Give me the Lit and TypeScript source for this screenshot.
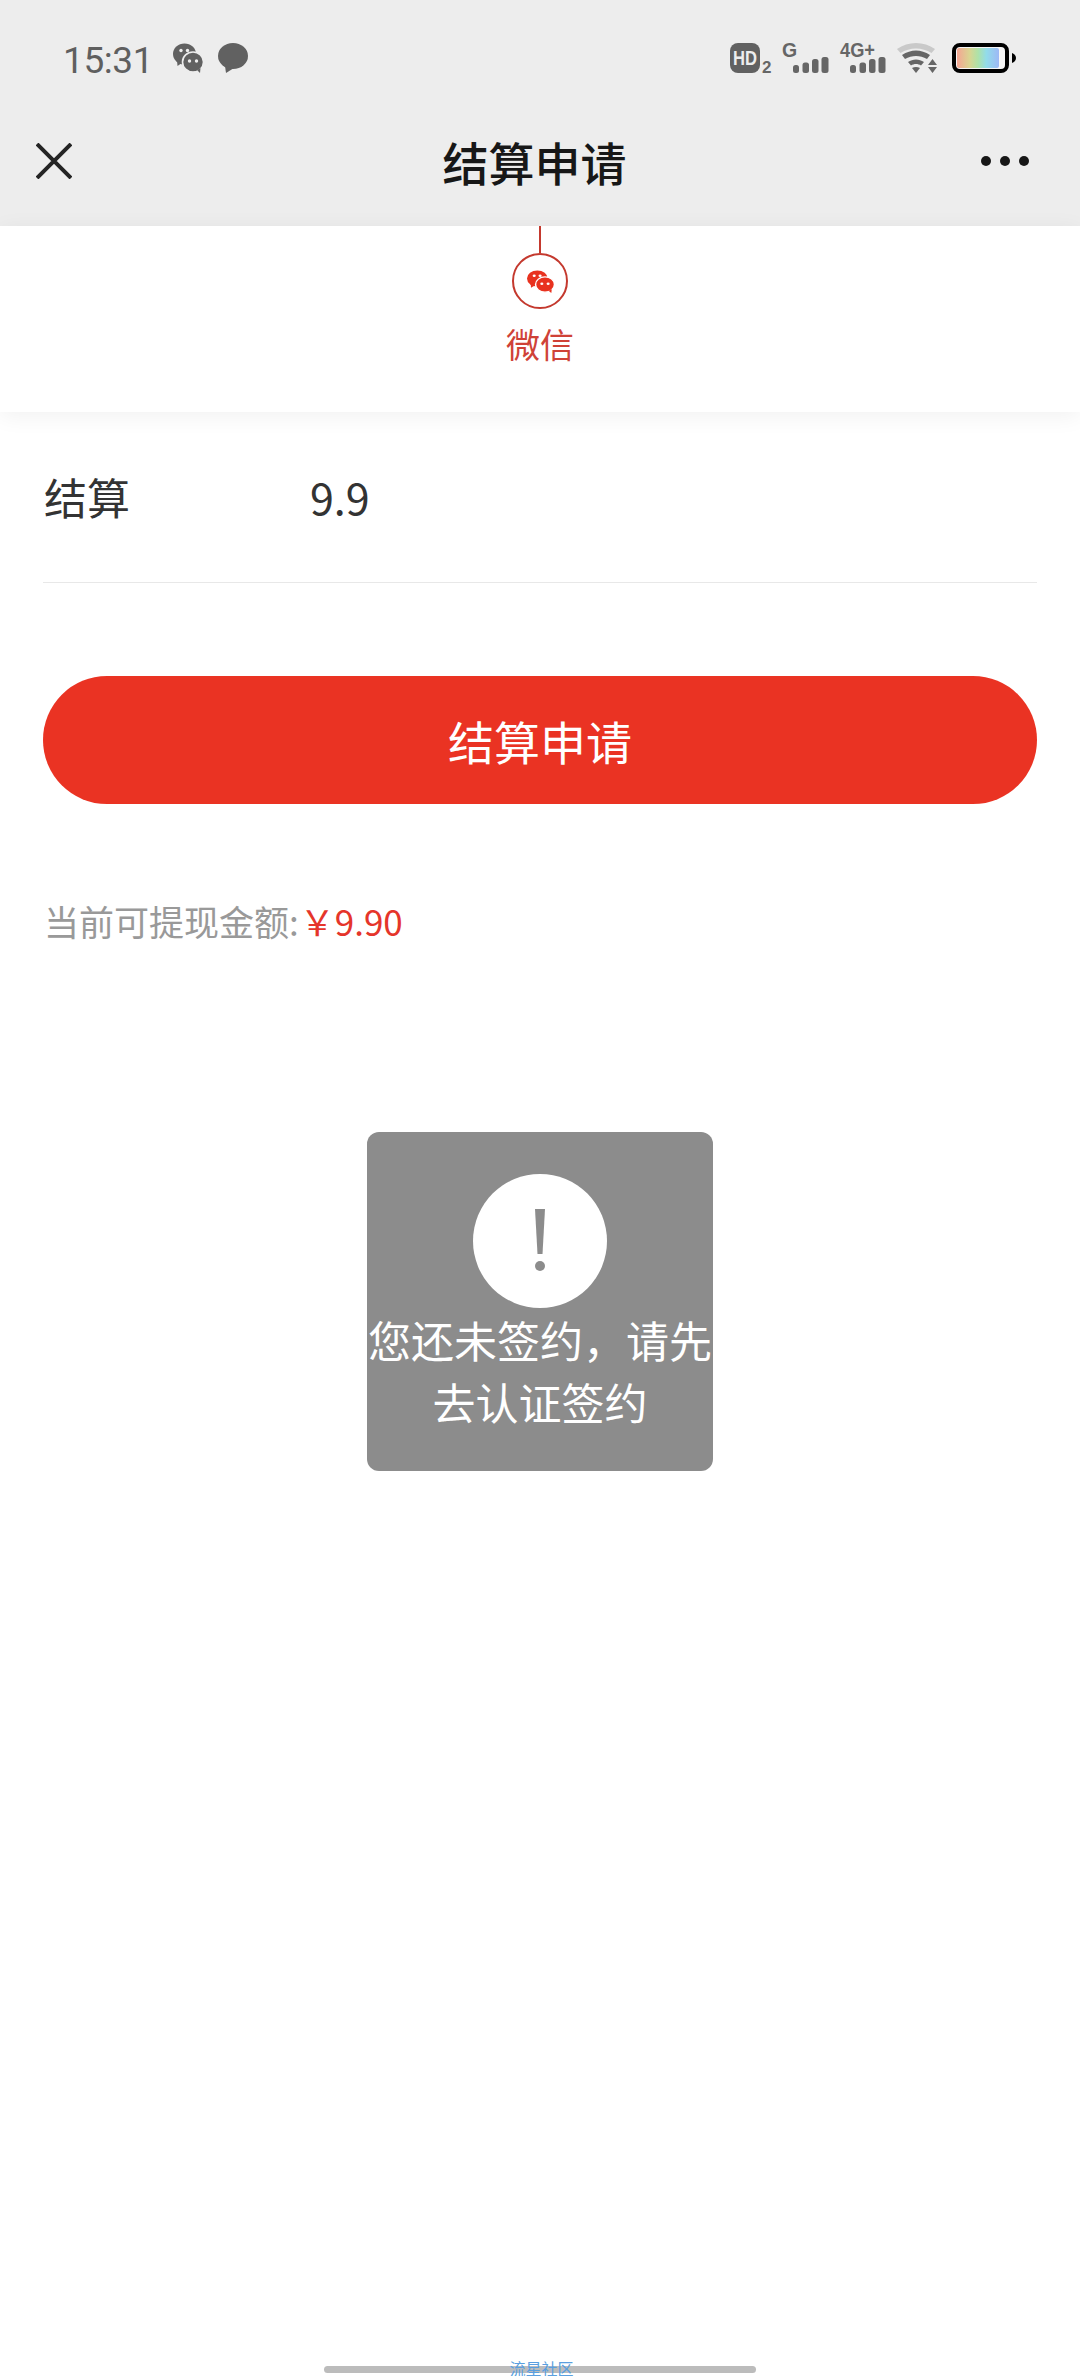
import { LitElement, html, css, svg } from "lit";
import { customElement } from "lit/decorators.js";

// two overlapping chat bubbles, drawn in a 30x30 box
const wechat = (fg: string, bg: string) => svg`
  <ellipse cx="11.5" cy="11" rx="11.5" ry="10.5" fill="${fg}" />
  <path d="M4 17l.5 6 5-3.5z" fill="${fg}" />
  <ellipse cx="20" cy="19" rx="10.5" ry="10" fill="${fg}" stroke="${bg}" stroke-width="1.6" />
  <path d="M24 27l3 3 .5-5z" fill="${fg}" />
  <circle cx="8" cy="7.5" r="1.7" fill="${bg}" />
  <circle cx="14.5" cy="7.5" r="1.7" fill="${bg}" />
  <circle cx="16.5" cy="18" r="1.7" fill="${bg}" />
  <circle cx="23.5" cy="18" r="1.7" fill="${bg}" />
`;

const signal = (x: number) => svg`
  <rect x="${x}" y="22" width="6" height="8" rx="2.5" fill="#666" />
  <rect x="${x + 9.5}" y="19.500" width="6.500" height="10.500" rx="2.5" fill="#666" />
  <rect x="${x + 19}" y="16" width="6.500" height="14" rx="2.5" fill="#666" />
  <rect x="${x + 28.5}" y="14" width="7" height="16" rx="2.5" fill="#666" />
`;

@customElement("app-root")
export class AppRoot extends LitElement {
  static styles = css`
    :host {
      display: block;
      font-family: "Noto Sans CJK SC", "Noto Sans", sans-serif;
    }
    .page {
      position: relative;
      display: flex;
      flex-direction: column;
      height: 2376px;
      overflow: hidden;
      background: #fff;
      color: #333;
    }
    .top {
      background: #ededed;
      height: 226px;
      flex: none;
    }
    .status {
      height: 116px;
      box-sizing: border-box;
      padding: 43px 64px 0 63px;
      display: flex;
      align-items: flex-start;
    }
    .time {
      font-family: Roboto, sans-serif;
      font-size: 37px;
      line-height: 34px;
      margin-top: 1px;
      color: #5f5f5f;
      width: 110px;
      letter-spacing: -0.4px;
    }
    .status svg {
      display: block;
      flex: none;
      overflow: visible;
    }
    .chat2 {
      margin-left: 15px;
    }
    .sys {
      margin-left: auto;
    }
    .sys text {
      font-family: "Liberation Sans", sans-serif;
      font-weight: 700;
      fill: #666;
    }
    .sys .hd {
      fill: #ededed;
    }
    .nav {
      height: 110px;
      display: flex;
      align-items: center;
      justify-content: space-between;
      padding: 0 36px;
      margin-top: -10px;
    }
    .nav svg {
      display: block;
    }
    .close {
      margin-right: 16px;
    }
    .dots {
      margin-right: -2px;
    }
    .title {
      font-size: 46px;
      font-weight: 500;
      color: #171717;
    }
    .panel {
      height: 186px;
      flex: none;
      display: flex;
      flex-direction: column;
      align-items: center;
      box-shadow: 0 4px 22px rgba(0, 0, 0, 0.06);
    }
    .stem {
      width: 2px;
      height: 27px;
      background: #c4392e;
    }
    .ring {
      width: 56px;
      height: 56px;
      box-sizing: border-box;
      border: 2px solid #c4392e;
      border-radius: 50%;
      display: flex;
      align-items: center;
      justify-content: center;
    }
    .method {
      margin-top: 10px;
      font-size: 34px;
      line-height: 50px;
      color: #cf4237;
    }
    .row {
      margin: 0 43px;
      height: 171px;
      padding-bottom: 2px;
      box-sizing: border-box;
      display: flex;
      align-items: center;
      border-bottom: 1px solid #e8e8e8;
      font-size: 43px;
      color: #333;
    }
    .label {
      width: 267px;
      padding-left: 1px;
      box-sizing: border-box;
    }
    .btn {
      margin: 93px 43px 0;
      height: 128px;
      border-radius: 64px;
      background: #ea3323;
      color: #fff;
      font-size: 46px;
      display: flex;
      align-items: center;
      justify-content: center;
    }
    .note {
      margin: 92px 44px 0;
      font-size: 35px;
      line-height: 50px;
      color: #999;
    }
    .note span {
      color: #e5352a;
      margin-left: 1px;
    }
    .toast {
      position: absolute;
      left: 367px;
      top: 1132px;
      width: 346px;
      height: 339px;
      border-radius: 12px;
      background: #8c8c8c;
      color: #fff;
      text-align: center;
      font-size: 43px;
      line-height: 62px;
      padding-top: 42px;
      box-sizing: border-box;
    }
    .alert {
      display: block;
      margin: 0 auto;
    }
    .foot {
      margin-top: auto;
      height: 10px;
      display: flex;
      justify-content: center;
    }
    .home {
      width: 432px;
      height: 7px;
      border-radius: 4px;
      background: #bcbcbc;
    }
    .mark {
      position: absolute;
      left: 3px;
      right: 0;
      bottom: 0;
      text-align: center;
      font-size: 16px;
      line-height: 16px;
      color: #5a9fe0;
    }
  `;

  render() {
    return html`
      <div class="page">
        <div class="top">
          <div class="status">
            <div class="time">15:31</div>
            <svg width="30" height="30" viewBox="0 0 30 30">${wechat("#616161", "#ededed")}</svg>
            <svg class="chat2" width="30" height="30" viewBox="0 0 30 30">
              <ellipse cx="15" cy="13" rx="15" ry="13" fill="#616161" />
              <path d="M7 23l1 7 8-5z" fill="#616161" />
            </svg>
            <svg class="sys" width="286" height="30" viewBox="0 0 286 30">
              <rect width="30" height="30" rx="8" fill="#616161" />
              <text class="hd" x="3" y="22" font-size="20" textLength="24" lengthAdjust="spacingAndGlyphs">HD</text>
              <text x="32" y="30" font-size="17">2</text>
              <text x="52" y="14" font-size="19.500">G</text>
              ${signal(63)}
              <text x="110" y="14" font-size="19.500" textLength="35" lengthAdjust="spacingAndGlyphs">4G+</text>
              ${signal(120)}
              <path d="M167 6C178-2 194-2 205 6l-3.500 4C192 4 180 4 170.500 10z" fill="#c9c9c9" />
              <path d="M172 12C181 6 191 6 200 12l-3 4C190 12 182 12 175 16z" fill="#666" />
              <path d="M178 19C183 15.500 189 15.500 194 19l-3 3.500C188 20.500 184 20.500 181 22.500z" fill="#666" />
              <path d="M182 25C184.500 23.500 187.500 23.500 190 25L186 30z" fill="#666" />
              <path d="M198 22l4.500-6 4.500 6zM198 24h9l-4.500 6z" fill="#666" />
              <rect x="224" y="2" width="53" height="26" rx="6" fill="#fff" fill-opacity="0.5" stroke="#000" stroke-width="4" />
              <defs>
                <linearGradient id="rb">
                  <stop offset="0" stop-color="#f4a593" />
                  <stop offset="0.3" stop-color="#d9d592" />
                  <stop offset="0.5" stop-color="#aee2a8" />
                  <stop offset="0.7" stop-color="#92dcea" />
                  <stop offset="1" stop-color="#9db8f5" />
                </linearGradient>
              </defs>
              <rect x="227" y="5" width="42" height="20" rx="2" fill="url(#rb)" />
              <path d="M282 10c2 .5 4 2.500 4 5s-2 4.500-4 5z" fill="#000" />
            </svg>
          </div>
          <div class="nav">
            <svg class="close" width="36" height="36" viewBox="0 0 36 36">
              <path d="M1 1l34 34M35 1L1 35" stroke="#242424" stroke-width="4" fill="none" />
            </svg>
            <div class="title">结算申请</div>
            <svg class="dots" width="65" height="10" viewBox="0 0 65 10">
              <circle cx="5" cy="5" r="5" fill="#171717" />
              <circle cx="24" cy="5" r="5" fill="#171717" />
              <circle cx="43" cy="5" r="5" fill="#171717" />
            </svg>
          </div>
        </div>

        <div class="panel">
          <div class="stem"></div>
          <div class="ring">
            <svg width="27" height="23" viewBox="0 0 30 30" preserveAspectRatio="none">${wechat("#e8321f", "#fff")}</svg>
          </div>
          <div class="method">微信</div>
        </div>

        <div class="row">
          <div class="label">结算</div>
          <div>9.9</div>
        </div>

        <div class="btn">结算申请</div>

        <div class="note">当前可提现金额:<span>￥9.90</span></div>

        <div class="toast">
          <svg class="alert" width="134" height="134" viewBox="0 0 134 134">
            <circle cx="67" cy="67" r="67" fill="#fff" />
            <path d="M62 35h10l-2.500 45h-5z" fill="#8c8c8c" />
            <circle cx="67" cy="92" r="5" fill="#8c8c8c" />
          </svg>
          您还未签约，请先去认证签约
        </div>

        <div class="foot"><div class="home"></div></div>
        <div class="mark">流星社区</div>
      </div>
    `;
  }
}
